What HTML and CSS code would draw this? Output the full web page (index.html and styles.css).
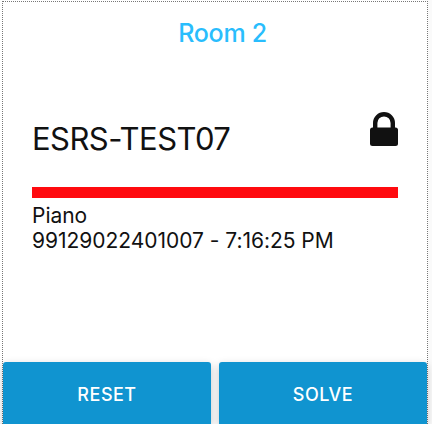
FILE: index.html
```html
<!DOCTYPE html>
<html lang="en">
<head>
<meta charset="utf-8">
<title>Room 2</title>
<link rel="stylesheet" href="styles.css">
</head>
<body>
<main class="room">
  <h1 class="room-title">Room 2</h1>
  <section class="device">
    <div class="device-head">
      <h2 class="device-name">ESRS-TEST07</h2>
      <svg class="lock" viewBox="0 0 28 34" aria-label="Locked"><path d="M5.2 18V11a8.8 8.8 0 0 1 17.6 0V18" fill="none" stroke="#111" stroke-width="4.4"/><rect y="15.5" width="28" height="18.5" rx="2.5" fill="#111"/></svg>
    </div>
    <div class="status-bar"></div>
    <p class="detail">Piano</p>
    <p class="detail">99129022401007 - 7:16:25 PM</p>
  </section>
  <div class="actions">
    <button class="action">RESET</button>
    <button class="action">SOLVE</button>
  </div>
</main>
</body>
</html>
```
FILE: styles.css
```css
* { box-sizing: border-box; }
body { margin: 0; background: #fafafa; font-family: Inter, "Liberation Sans", sans-serif; color: #111; overflow: hidden; }
.room { margin: 1px 4px 0 2px; height: 423px; border: 1px dotted #777; border-bottom: 0; background: #fff; box-shadow: -2px -1px #fff; display: flex; flex-direction: column; }
.room-title { margin: 15px 0 0 15px; text-align: center; font-size: 25px; line-height: 32px; font-weight: 450; letter-spacing: -.3px; color: #29bdfd; }
.device { margin: 62px 29px 0; }
.device-head { display: flex; justify-content: space-between; height: 76px; }
.device-name { margin: 8px 0 0; font-size: 31px; line-height: 40px; font-weight: 400; letter-spacing: -.55px; }
.lock { width: 28px; height: 34px; margin-top: 1px; }
.status-bar { height: 11px; background: #ff0a0f; margin-bottom: 5px; }
.detail { margin: 0; font-size: 21px; line-height: 25px; letter-spacing: -.03px; white-space: nowrap; }
.actions { margin-top: auto; display: flex; gap: 8px; height: 62px; }
.action { flex: 1; border: 0; border-radius: 3px 3px 0 0; background: #1094d0; color: #fff; font: 500 18px/1 Inter, sans-serif; letter-spacing: .5px; padding: 4px 0 0; box-shadow: 0 3px 8px rgba(0, 0, 0, .22); }
```
